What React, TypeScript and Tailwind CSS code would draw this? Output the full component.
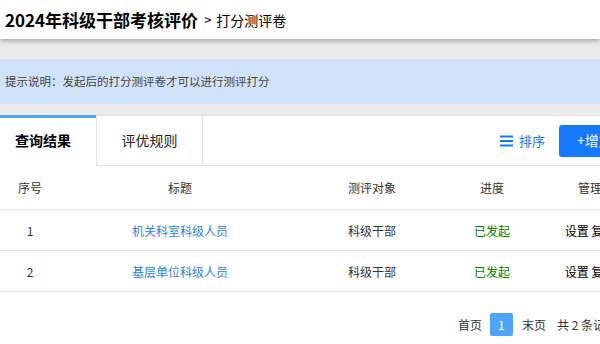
import React from "react";

const rows = [
  { id: 1, title: "机关科室科级人员", target: "科级干部", status: "已发起" },
  { id: 2, title: "基层单位科级人员", target: "科级干部", status: "已发起" },
];

function ListIcon() {
  return (
    <svg width="13" height="12" viewBox="0 0 13 12" className="mr-[6px]">
      <rect x="0" y="0.5" width="13" height="2" fill="#1677ff" />
      <rect x="0" y="5" width="13" height="2" fill="#1677ff" />
      <rect x="0" y="9.5" width="13" height="2" fill="#1677ff" />
    </svg>
  );
}

export default function App() {
  return (
    <div
      className="w-[600px] h-[344px] overflow-hidden bg-[#ebebeb] flex flex-col text-[#333]"
      style={{ fontFamily: '"Noto Sans CJK SC", "Noto Sans", sans-serif' }}
    >
      <header className="h-[39px] shrink-0 bg-white flex items-center px-[5px] shadow-[0_2px_5px_rgba(0,0,0,0.3)] relative z-10">
        <h1 className="text-[17px] font-bold text-black leading-none">2024年科级干部考核评价</h1>
        <span className="ml-[6px] text-[13px] text-black leading-none">&gt;</span>
        <span className="ml-[5px] text-[14px] text-black leading-none">打分测评卷</span>
      </header>

      <div className="mt-[20px] h-[45px] shrink-0 bg-[#d0e3fb] flex items-center px-[5px] text-[11.5px] text-[#444]">
        提示说明：发起后的打分测评卷才可以进行测评打分
      </div>

      <section className="mt-[11px] w-[640px] flex-1 shrink-0 bg-white">
        <div className="flex h-[51px]">
          <div className="w-[96px] border-t-[3px] border-[#4ea5f7] flex items-center justify-center text-[14px] font-bold text-black pb-[3px] pr-[10px]">
            查询结果
          </div>
          <div className="w-[107px] border border-[#e3e3e3] flex items-center justify-center text-[14px] text-[#222]">
            评优规则
          </div>
          <div className="flex-1 border-t border-b border-[#e3e3e3] flex items-center justify-end pr-[9px]">
            <button className="flex items-center text-[13px] text-[#1677ff]">
              <ListIcon />
              排序
            </button>
            <button className="ml-[14px] w-[72px] h-[32px] rounded-[3px] bg-[#1677ff] text-white text-[14px] flex items-center pl-[18px]">
              +增加
            </button>
          </div>
        </div>

        <div className="text-[12px]">
          <div className="flex h-[44px] items-center border-b border-[#e3e3e3]">
            <div className="w-[60px] text-center">序号</div>
            <div className="w-[240px] text-center">标题</div>
            <div className="w-[144px] text-center">测评对象</div>
            <div className="w-[96px] text-center">进度</div>
            <div className="w-[100px] text-center">管理</div>
          </div>
          {rows.map((r) => (
            <div key={r.id} className="flex h-[41px] items-center border-b border-[#e3e3e3] pt-[2px]">
              <div className="w-[60px] text-center">{r.id}</div>
              <div className="w-[240px] text-center text-[#2f7fe6]">{r.title}</div>
              <div className="w-[144px] text-center">{r.target}</div>
              <div className="w-[96px] text-center text-[#008000]">{r.status}</div>
              <div className="w-[100px] text-center text-black">设置 复制</div>
            </div>
          ))}
        </div>

        <div className="mt-[21px] flex items-center justify-end pr-[23px] text-[12px]">
          <span>首页</span>
          <span className="ml-[8px] w-[23px] h-[23px] rounded-[2px] bg-[#4ea5f7] text-white flex items-center justify-center">1</span>
          <span className="ml-[9px]">末页</span>
          <span className="ml-[11px]">共 2 条记录</span>
        </div>
      </section>
    </div>
  );
}
